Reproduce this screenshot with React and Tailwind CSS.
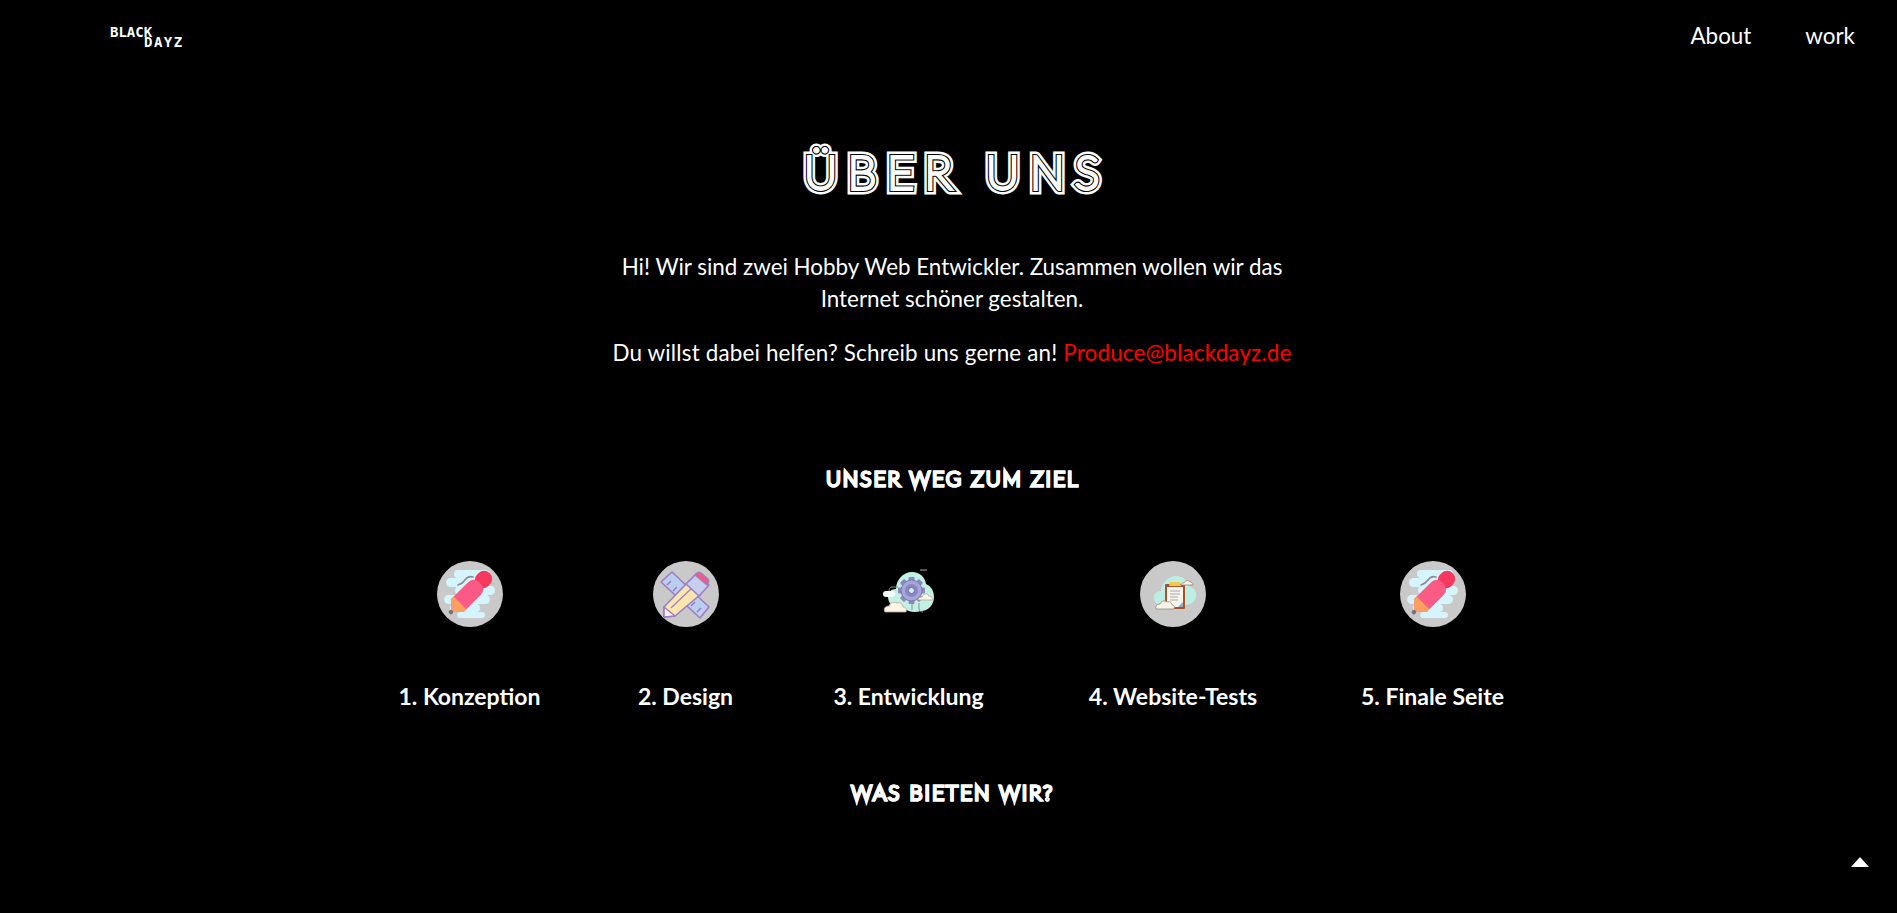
const steps = [
  { label: '1. Konzeption', width: 'w-[140px]', icon: <PenIcon /> },
  { label: '2. Design', width: 'w-[92px]', icon: <RulerIcon /> },
  { label: '3. Entwicklung', width: 'w-[154px]', icon: <GearIcon /> },
  { label: '4. Website-Tests', width: 'w-[175px]', icon: <ClipboardIcon /> },
  { label: '5. Finale Seite', width: 'w-[144px]', icon: <PenIcon /> },
];

function PenIcon() {
  return (
    <svg width="66" height="66" viewBox="0 0 66 66">
      <circle cx="33" cy="33" r="33" fill="#c9c9c9" />
      <g fill="#d6f4fb">
        <rect x="17" y="9" width="36" height="8" rx="4" />
        <rect x="9" y="17" width="38" height="9" rx="4.5" />
        <rect x="18" y="25" width="40" height="9" rx="4.5" />
        <rect x="7" y="34" width="46" height="9" rx="4.5" />
        <rect x="13" y="43" width="30" height="8" rx="4" />
        <rect x="20" y="51" width="28" height="6" rx="3" />
        <rect x="44" y="45" width="12" height="5" rx="2.5" fill="#c9c9c9" />
      </g>
      <path d="M21 24c3-1 5-2 7-5 2-3 5-4 8-3" fill="none" stroke="#8b8b93" strokeWidth="1.6" strokeLinecap="round" />
      <g transform="rotate(-45 33 32)">
        <rect x="43" y="24" width="18" height="16" rx="8" fill="#f8395f" />
        <path d="M7 32 15 23H39Q47 23 47 32 47 41 39 41H15Z" fill="#fb5a85" />
        <path d="M7 32 15 23H19V41H15Z" fill="#fd9f62" />
        <circle cx="6" cy="32" r="2.2" fill="#6f7378" />
      </g>
    </svg>
  );
}

function RulerIcon() {
  return (
    <svg width="66" height="66" viewBox="0 0 66 66">
      <circle cx="33" cy="33" r="33" fill="#c9c9c9" />
      <g stroke="#9c7fc4" strokeWidth="1.6" strokeLinejoin="round">
        <path d="M8 21 19 11 56 46 47 57z" fill="#bccdf2" />
        <path d="M14 24l4-4M20 30l4-4M26 36l3-3M38 45l4-4M44 51l4-4" fill="none" />
        <path d="M11 46 36 20 48 33 22 55 11 56z" fill="#fbe6ae" />
        <path d="M18 47 40 26" fill="none" strokeWidth="1.2" />
        <path d="M11 56V46L22 55z" fill="#fff3e2" />
        <path d="M33 23 43 13 56 24 46 35z" fill="#c6d0ee" />
        <path d="M42 14l2-2c1-1 3-1 4 0l7 6c1 1 1 3 0 4l-1 2z" fill="#f8587c" />
      </g>
    </svg>
  );
}

function GearIcon() {
  const teeth = [0, 45, 90, 135, 180, 225, 270, 315];
  return (
    <svg width="66" height="66" viewBox="0 0 66 66">
      <g transform="translate(2 0)">
        <path d="M10 36c0-5 3-8 8-8 0-9 7-17 16-17 8 0 13 5 14 12 5 2 8 7 8 13 0 8-6 14-13 14-6 2-12 1-16-2-8 2-17-4-17-12z" fill="#c3f0e4" />
        <g fill="#8c88b8">
          {teeth.map((a) => (
            <rect key={a} x="30.5" y="16" width="6" height="6" rx="1" transform={`rotate(${a} 33.5 29.5)`} />
          ))}
        </g>
        <circle cx="33.5" cy="29.5" r="10.5" fill="#a6a6da" stroke="#7f7aa8" strokeWidth="1" />
        <circle cx="33.5" cy="29.5" r="6.5" fill="#8786c6" />
        <circle cx="33.5" cy="29.5" r="3" fill="#d8eef2" stroke="#6f6e9f" strokeWidth="1" />
        <path d="M34 43v6M20 26h-6c-2 0-3 2-3 4M41 42v6c0 2 2 3 4 3" fill="none" stroke="#8d8d8d" strokeWidth="1" />
        <path d="M7 51c-2-3 0-6 4-6 1-3 5-5 8-3 3-1 6 1 6 4 3 0 4 2 3 5z" fill="#fbf3e4" stroke="#b0a898" strokeWidth="0.8" />
        <path d="M40 39c0-2 2-3 4-3 1-4 6-4 7-1 2 0 4 2 4 4z" fill="#fbf3e4" stroke="#b0a898" strokeWidth="0.8" />
        <rect x="5" y="30" width="12" height="6" rx="3" fill="#f3fbfa" />
        <path d="M42 9h7" stroke="#ddd" strokeWidth="0.8" />
      </g>
    </svg>
  );
}

function ClipboardIcon() {
  return (
    <svg width="66" height="66" viewBox="0 0 66 66">
      <circle cx="33" cy="33" r="33" fill="#c9c9c9" />
      <path d="M14 38c-1-5 3-8 7-8 1-8 7-15 15-15 8 0 12 5 14 11 5 1 7 5 6 10-1 5-6 8-11 8H22c-4 0-7-2-8-6z" fill="#bdeee2" />
      <rect x="25" y="23" width="20" height="25" rx="1" fill="#a9532e" />
      <rect x="27" y="26" width="16" height="20" fill="#f6f4ee" />
      <path d="M30 21h10l1 4H29z" fill="#f4c94a" />
      <path d="M30 30h10M30 33h10M30 36h8M30 39h8" stroke="#a8a8a8" strokeWidth="1" />
      <path d="M38 46l5-5v5z" fill="#8fa8c0" />
      <path d="M16 48c-1-3 1-5 4-5 1-3 5-4 7-2 3-1 5 1 5 3 2 0 3 2 2 4z" fill="#fbf3e4" stroke="#8d8a80" strokeWidth="0.8" />
      <path d="M41 24c0-2 2-2 3-2 1-3 5-3 6-1 2 0 3 1 3 3z" fill="#fbf3e4" stroke="#8d8a80" strokeWidth="0.8" />
    </svg>
  );
}

function App() {
  return (
    <div className="relative min-h-screen overflow-hidden bg-black text-white font-['Lato','Noto_Sans',sans-serif]">
      <header className="flex h-[72px] items-start justify-between pl-[110px] pr-[42px]">
        <div className="mt-[27px] font-['DejaVu_Sans_Mono',monospace] text-[14px] font-bold leading-[10px] text-white">
          <div className="tracking-[0px]">BLACK</div>
          <div className="ml-[34px] tracking-[1.5px]">DAYZ</div>
        </div>
        <nav className="mt-[21px] flex gap-[54px] text-[22.4px] leading-[30px]">
          <a href="#">About</a>
          <a href="#">work</a>
        </nav>
      </header>

      <main className="flex flex-col items-center pl-[7px]">
        <h1
          data-text="ÜBER UNS"
          className="relative mt-[63px] -mr-[10px] text-[46px] leading-[74px] font-thin tracking-[10.7px] [-webkit-text-stroke:11px_white] before:absolute before:inset-0 before:content-[attr(data-text)] before:[-webkit-text-stroke:6px_black] after:absolute after:inset-0 after:content-[attr(data-text)] after:text-white after:[-webkit-text-stroke:3.8px_white]"
        >
          ÜBER UNS
        </h1>

        <p className="mt-[42px] w-[700px] text-center text-[22.4px] leading-[32px]">
          Hi! Wir sind zwei Hobby Web Entwickler. Zusammen wollen wir das Internet schöner gestalten.
        </p>
        <p className="mt-[22px] text-center text-[22.4px] leading-[32px] tracking-[0.17px]">
          Du willst dabei helfen? Schreib uns gerne an! <a href="#" className="text-[#ff0000]">Produce@blackdayz.de</a>
        </p>

        <h2
          data-text="UNSER WEG ZUM ZIEL"
          className="relative mt-[94px] -mr-[2px] text-[20px] leading-[30px] font-thin tracking-[2.5px] [-webkit-text-stroke:3.2px_white] after:absolute after:inset-0 after:content-[attr(data-text)] after:text-[#b8b8b8]"
        >
          UNSER WEG ZUM ZIEL
        </h2>

        <div className="mt-[68px] flex gap-[100px]">
          {steps.map((step) => (
            <div key={step.label} className={`flex flex-col items-center ${step.width}`}>
              {step.icon}
              <div className="mt-[54px] whitespace-nowrap text-center text-[23px] leading-[30px] font-bold">{step.label}</div>
            </div>
          ))}
        </div>

        <h2
          data-text="WAS BIETEN WIR?"
          className="relative mt-[66px] -mr-[2px] text-[20px] leading-[30px] font-thin tracking-[2.5px] [-webkit-text-stroke:3.2px_white] after:absolute after:inset-0 after:content-[attr(data-text)] after:text-[#b8b8b8]"
        >
          WAS BIETEN WIR?
        </h2>
      </main>

      <svg className="fixed right-[28px] bottom-[46px]" width="18" height="10" viewBox="0 0 18 10">
        <path d="M9 0 18 10H0z" fill="#fff" />
      </svg>
    </div>
  );
}

export default App;
